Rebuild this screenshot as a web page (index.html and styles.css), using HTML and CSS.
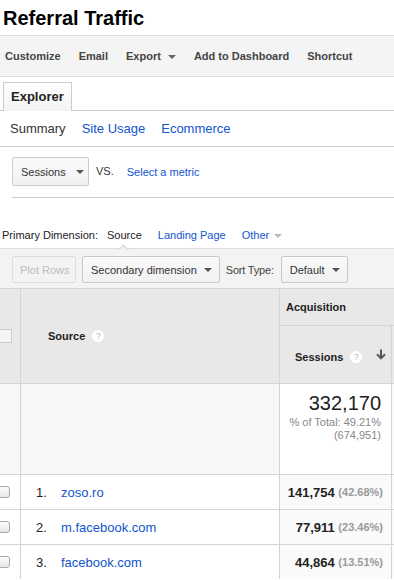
FILE: index.html
```html
<!DOCTYPE html>
<html lang="en">
<head>
    <meta charset="UTF-8">
    <meta name="viewport" content="width=device-width, initial-scale=1.0">
    <title>Referral Traffic</title>
    <link rel="stylesheet" href="styles.css">
</head>
<body>
    <h1 class="title">Referral Traffic</h1>

    <div class="toolbar">
      <span class="tool">Customize</span>
      <span class="tool">Email</span>
      <span class="tool">Export <span class="caret"></span></span>
      <span class="tool">Add to Dashboard</span>
      <span class="tool">Shortcut</span>
    </div>

    <div class="tab-row">
      <div class="tab">Explorer</div>
    </div>

    <div class="subtabs">
      <span class="subtab current">Summary</span>
      <span class="subtab">Site Usage</span>
      <span class="subtab">Ecommerce</span>
    </div>

    <div class="metric-row">
      <div class="select">Sessions <span class="caret dark"></span></div>
      <span class="vs">VS.</span>
      <span class="link small">Select a metric</span>
    </div>

    <div class="dim-row">
      <span class="dim-label">Primary Dimension:</span>
      <span class="dim current">Source</span>
      <span class="dim link">Landing Page</span>
      <span class="dim link">Other <span class="caret light"></span></span>
    </div>

    <div class="controls">
      <div class="btn disabled">Plot Rows</div>
      <div class="btn">Secondary dimension <span class="caret dark"></span></div>
      <span class="sort-label">Sort Type:</span>
      <div class="btn">Default <span class="caret dark"></span></div>
    </div>

    <div class="report">
      <div class="cell head chk-col tall"><span class="box"></span></div>
      <div class="cell head src-head tall">Source <span class="help">?</span></div>
      <div class="cell head acq">Acquisition</div>
      <div class="cell head sess-head">
        Sessions <span class="help">?</span>
        <svg class="sort" width="10" height="11" viewBox="0 0 10 11">
          <path d="M5 0.5 V9 M1 5.2 L5 9.4 L9 5.2" fill="none" stroke="#555" stroke-width="2"/>
        </svg>
      </div>
      <div class="cell head filler"></div>

      <div class="cell total-side"></div>
      <div class="cell total-side"></div>
      <div class="cell total">
        <div class="total-num">332,170</div>
        <div class="total-sub">% of Total: 49.21%</div>
        <div class="total-sub">(674,951)</div>
      </div>
      <div class="cell filler"></div>

      <div class="cell chk-col"><span class="row-box"></span></div>
      <div class="cell src"><span class="num">1.</span><span class="link">zoso.ro</span></div>
      <div class="cell val">141,754 <span class="pct">(42.68%)</span></div>
      <div class="cell filler"></div>

      <div class="cell chk-col"><span class="row-box"></span></div>
      <div class="cell src"><span class="num">2.</span><span class="link">m.facebook.com</span></div>
      <div class="cell val">77,911 <span class="pct">(23.46%)</span></div>
      <div class="cell filler"></div>

      <div class="cell chk-col"><span class="row-box"></span></div>
      <div class="cell src"><span class="num">3.</span><span class="link">facebook.com</span></div>
      <div class="cell val">44,864 <span class="pct">(13.51%)</span></div>
      <div class="cell filler"></div>
    </div>
</body>
</html>
```

FILE: styles.css
```css
body {
  margin: 0;
  font-family: "Liberation Sans", Arial, sans-serif;
  color: #222;
  background: #fff;
  overflow: hidden;
}
.title {
  margin: 0;
  padding: 6px 3px 5px;
  font-size: 20px;
  line-height: 24px;
  font-weight: bold;
  color: #000;
}
.toolbar {
  display: flex;
  align-items: center;
  gap: 18px;
  height: 40px;
  padding-left: 5px;
  background: #f4f4f4;
  border-top: 1px solid #dcdcdc;
  border-bottom: 1px solid #dcdcdc;
}
.tool {
  font-size: 11px;
  font-weight: bold;
  color: #444;
  white-space: nowrap;
}
.caret {
  display: inline-block;
  width: 0;
  height: 0;
  margin-left: 4px;
  vertical-align: middle;
  border-left: 4px solid transparent;
  border-right: 4px solid transparent;
  border-top: 4px solid #666;
}
.caret.dark {
  border-top-color: #555;
  margin-left: 10px;
}
.btn .caret.dark {
  margin-left: 7px;
}
.caret.light {
  border-top-color: #bbb;
  margin-left: 2px;
}
.tab-row {
  display: flex;
  align-items: flex-end;
  height: 33px;
  padding-left: 3px;
  border-bottom: 1px solid #ccc;
}
.tab {
  box-sizing: border-box;
  height: 29px;
  width: 69px;
  margin-bottom: -1px;
  padding: 6px 0 0 7px;
  font-size: 13px;
  font-weight: bold;
  color: #222;
  background: linear-gradient(#fff, #f3f3f3);
  border: 1px solid #ccc;
  border-bottom: none;
}
.subtabs {
  display: flex;
  align-items: center;
  gap: 16px;
  height: 35px;
  padding-left: 10px;
  border-bottom: 1px solid #ccc;
  font-size: 13px;
}
.subtab {
  color: #15c;
}
.subtab.current {
  color: #333;
}
.link {
  color: #15c;
}
.metric-row {
  display: flex;
  align-items: center;
  margin-left: 12px;
  padding: 10px 0 11px;
  border-bottom: 1px solid #ccc;
  font-size: 11px;
}
.select {
  box-sizing: border-box;
  display: flex;
  align-items: center;
  width: 77px;
  height: 29px;
  padding-left: 8px;
  border: 1px solid #ccc;
  border-radius: 2px;
  background: linear-gradient(#fafafa, #f1f1f1);
  color: #333;
}
.vs {
  margin: 0 13px 0 7px;
  color: #333;
  position: relative;
  top: -1px;
}
.dim-row {
  display: flex;
  align-items: center;
  height: 14px;
  padding: 30px 0 6px 2px;
  font-size: 11px;
}
.dim-label {
  margin-right: 9px;
}
.dim {
  margin-right: 16px;
}
.dim.current {
  position: relative;
  color: #222;
}
.dim.current::after {
  content: "";
  position: absolute;
  left: 13px;
  top: 17px;
  width: 6px;
  height: 6px;
  background: #f3f3f3;
  border-top: 1px solid #d6d6d6;
  border-left: 1px solid #d6d6d6;
  transform: rotate(45deg);
}
.controls {
  display: flex;
  align-items: center;
  gap: 6px;
  padding: 7px 0 5px 12px;
  background: #f3f3f3;
  border-top: 1px solid #dedede;
  font-size: 11px;
}
.btn {
  box-sizing: border-box;
  display: flex;
  align-items: center;
  height: 27px;
  padding: 0 7px 0 8px;
  border: 1px solid #c8c8c8;
  border-radius: 2px;
  background: linear-gradient(#fafafa, #f1f1f1);
  color: #333;
  white-space: nowrap;
}
.btn.disabled {
  width: 64px;
  padding: 0 7px;
  color: #bbb;
  border-color: #ddd;
  background: #f3f3f3;
}
.sort-label {
  color: #444;
  margin-right: 1px;
  letter-spacing: -0.2px;
}
.report {
  display: grid;
  grid-template-columns: 20px 258px 111px 1fr;
  grid-template-rows: 36px 57px 90px 34px 34px 34px;
  gap: 1px;
  background: #d4d4d4;
  border-top: 1px solid #d4d4d4;
  font-size: 11px;
}
.cell {
  background: #fff;
  display: flex;
  align-items: center;
}
.head {
  background: #e8e8e8;
  font-weight: bold;
  color: #222;
}
.tall {
  grid-row: span 2;
}
.acq {
  grid-column: 3 / 5;
  padding-left: 6px;
}
.sess-head {
  padding: 0 0 0 15px;
  padding-top: 4px;
}
.head.filler {
  background: #e8e8e8;
}
.src-head {
  padding-left: 27px;
}
.help {
  display: inline-flex;
  align-items: center;
  justify-content: center;
  width: 12px;
  height: 12px;
  margin-left: 7px;
  border-radius: 50%;
  background: #fff;
  color: #bbb;
  font-size: 9px;
  font-weight: normal;
}
.sort {
  margin-left: 14px;
  margin-top: -4px;
}
.box {
  box-sizing: border-box;
  width: 13px;
  height: 14px;
  margin-left: -1px;
  border: 1px solid #ccc;
  background: #f4f4f4;
}
.total-side {
  background: #f7f7f7;
}
.total {
  flex-direction: column;
  align-items: flex-end;
  justify-content: flex-start;
  padding: 8px 10px 0 0;
}
.total-num {
  font-size: 20px;
  line-height: 22px;
  color: #222;
  margin-bottom: 2px;
}
.total-sub {
  line-height: 13px;
  color: #888;
}
.row-box {
  box-sizing: border-box;
  width: 13px;
  height: 12px;
  margin-left: -3px;
  border: 1px solid #aaa;
  border-radius: 3px;
  background: linear-gradient(#fdfdfd, #e6e6e6);
}
.src {
  padding-left: 15px;
  font-size: 13px;
}
.num {
  width: 25px;
  color: #222;
}
.val {
  justify-content: flex-end;
  padding-right: 8px;
  font-size: 13px;
  font-weight: bold;
  color: #222;
  background: #fafafa;
  white-space: pre;
}
.pct {
  font-size: 11px;
  color: #999;
}
.filler {
  background: #fafafa;
}
```
